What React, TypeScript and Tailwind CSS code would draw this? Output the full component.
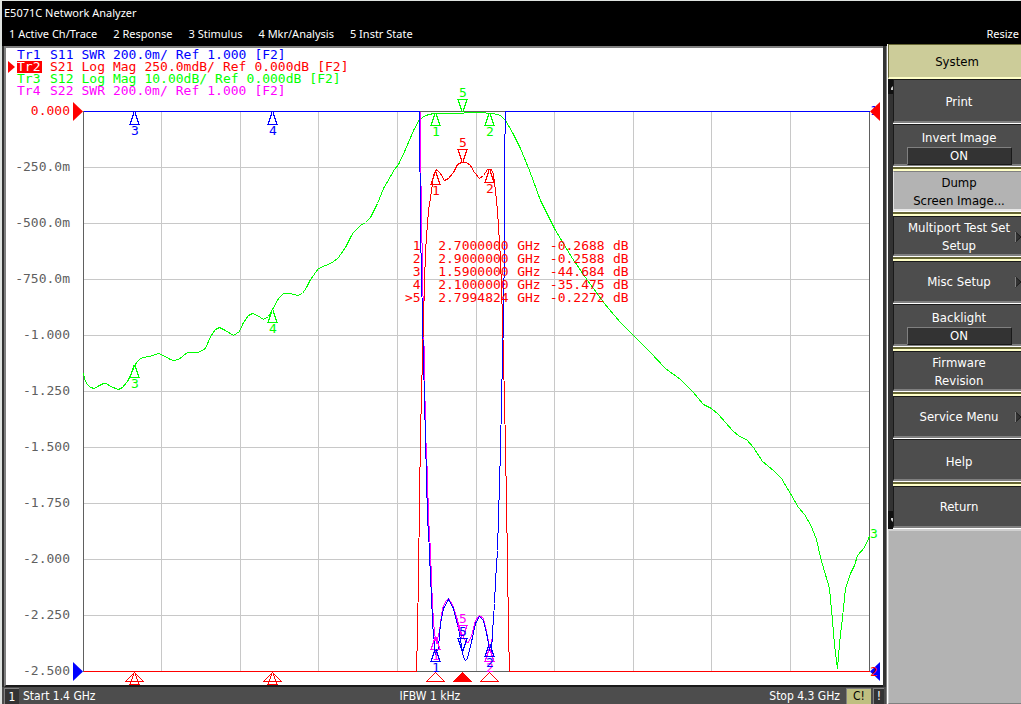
import React from 'react';
import { clsx } from 'clsx';

type Point = [number, number];

const BLUE = '#0000ff';
const RED = '#ff0000';
const GREEN = '#00ff00';
const MAGENTA = '#ff00ff';

const menus = ['1 Active Ch/Trace', '2 Response', '3 Stimulus', '4 Mkr/Analysis', '5 Instr State'];

const traces = [
  { id: 'Tr1', parts: ['S11', 'SWR', '200.0m/', 'Ref', '1.000', '[F2]'], color: 'text-[#0000ff]' },
  { id: 'Tr2', parts: ['S21', 'Log', 'Mag', '250.0mdB/', 'Ref', '0.000dB', '[F2]'], color: 'text-[#ff0000]', active: true },
  { id: 'Tr3', parts: ['S12', 'Log', 'Mag', '10.00dB/', 'Ref', '0.000dB', '[F2]'], color: 'text-[#00ff00]' },
  { id: 'Tr4', parts: ['S22', 'SWR', '200.0m/', 'Ref', '1.000', '[F2]'], color: 'text-[#ff00ff]' },
];

const readout = [
  ['1', '2.7000000', 'GHz', '-0.2688', 'dB'],
  ['2', '2.9000000', 'GHz', '-0.2588', 'dB'],
  ['3', '1.5900000', 'GHz', '-44.684', 'dB'],
  ['4', '2.1000000', 'GHz', '-35.475', 'dB'],
  ['>5', '2.7994824', 'GHz', '-0.2272', 'dB'],
];

const axisLabels = ['0.000', '-250.0m', '-500.0m', '-750.0m', '-1.000', '-1.250', '-1.500', '-1.750', '-2.000', '-2.250', '-2.500'];
const gridX = [161, 240, 318, 397, 476, 554, 633, 711, 790];

const s12: Point[] = [
  [83, 373], [84, 378], [86, 383], [90, 387], [94, 388], [99, 385], [103, 383], [106, 383], [110, 386], [118, 389],
  [122, 387], [127, 381], [131, 373], [134, 365], [137, 361], [140, 358], [143, 357], [149, 356], [158, 353], [163, 355],
  [170, 359], [173, 360], [178, 359], [187, 352], [198, 352], [205, 348], [210, 336], [215, 329], [219, 327], [225, 330],
  [233, 335], [239, 331], [243, 322], [248, 315], [252, 313], [257, 315], [263, 319], [268, 316], [272, 309], [278, 298],
  [283, 293], [290, 293], [297, 295], [302, 293], [306, 287], [310, 279], [318, 268], [325, 265], [332, 262], [338, 257],
  [345, 247], [350, 237], [353, 232], [360, 225], [365, 222], [370, 217], [377, 203], [383, 188], [394, 169], [398, 164],
  [405, 149], [413, 130], [419, 119], [425, 115], [433, 113], [450, 113], [477, 112], [493, 113], [500, 115], [505, 120],
  [512, 132], [520, 148], [529, 170], [540, 200], [555, 230], [563, 243], [572, 258], [587, 280], [604, 303], [608, 308],
  [620, 322], [633, 335], [650, 352], [665, 368], [680, 379], [692, 391], [703, 404], [711, 408], [718, 414], [732, 430],
  [739, 436], [746, 439], [753, 447], [762, 461], [773, 470], [781, 478], [790, 493], [798, 507], [804, 514], [810, 524],
  [816, 539], [820, 557], [829, 588], [832, 620], [834, 645], [837, 668], [839, 643], [842, 617], [845, 588], [850, 573],
  [854, 565], [857, 555], [864, 547], [869, 536],
];

const s21: Point[] = [
  [83, 671], [416, 671], [417, 632], [418, 574], [419, 503], [420, 433], [423, 318], [425, 250], [428, 210], [430, 197],
  [432, 183], [433, 175], [436, 169], [440, 173], [444, 180], [448, 178], [453, 172], [457, 164], [461, 162], [466, 162],
  [470, 165], [474, 172], [479, 178], [483, 175], [487, 169], [491, 169], [493, 174], [495, 190], [497, 210], [500, 258],
  [502, 318], [504, 400], [505, 447], [506, 503], [507, 560], [508, 630], [509, 671], [869, 671],
];

const s11: Point[] = [
  [83, 111], [419, 111], [420, 230], [422, 318], [424, 400], [426, 477], [427, 517], [429, 550], [430, 580], [431, 593],
  [432, 623], [435, 654], [438, 647], [440, 623], [443, 608], [448, 599], [453, 608], [458, 628], [461, 645], [463, 657],
  [465, 660], [467, 658], [472, 637], [475, 623], [479, 616], [483, 620], [487, 637], [489, 650], [491, 652], [492, 632],
  [494, 603], [495, 580], [497, 550], [498, 517], [499, 483], [500, 450], [501, 400], [503, 318], [504, 240], [504, 157],
  [505, 111], [869, 111],
];

const s22: Point[] = [
  [420, 111], [420, 157], [422, 270], [424, 370], [425, 430], [427, 477], [428, 517], [430, 550], [431, 580], [432, 605],
  [434, 633], [436, 643], [439, 630], [442, 608], [445, 601], [448, 598], [452, 604], [456, 616], [459, 628], [463, 637],
  [466, 642], [468, 642], [471, 635], [475, 620], [479, 615], [483, 618], [486, 631], [489, 646], [491, 645], [492, 632],
  [494, 603], [495, 580], [497, 550], [498, 517], [499, 483], [500, 450], [501, 400], [503, 318], [504, 240], [504, 157],
  [505, 111],
];

const line = (points: Point[]) => points.map(([x, y]) => `${x + 0.5},${y + 0.5}`).join(' ');

// Plot markers: x and y give the tip, the number sits at the flat end
const markers = [
  { n: 3, x: 134, y: 365, color: GREEN },
  { n: 4, x: 272, y: 310, color: GREEN },
  { n: 1, x: 435, y: 113, color: GREEN },
  { n: 2, x: 489, y: 113, color: GREEN },
  { n: 5, x: 462, y: 111, color: GREEN, down: true },
  { n: 1, x: 435, y: 172, color: RED },
  { n: 2, x: 489, y: 170, color: RED },
  { n: 5, x: 462, y: 161, color: RED, down: true },
  { n: 1, x: 435, y: 637, color: MAGENTA },
  { n: 2, x: 489, y: 649, color: MAGENTA },
  { n: 5, x: 462, y: 637, color: MAGENTA, down: true },
  { n: 3, x: 134, y: 112, color: BLUE },
  { n: 4, x: 272, y: 112, color: BLUE },
  { n: 1, x: 435, y: 649, color: BLUE },
  { n: 2, x: 489, y: 644, color: BLUE },
  { n: 5, x: 462, y: 650, color: BLUE, down: true },
];

const Marker = ({ n, x, y, color, down }: { n: number; x: number; y: number; color: string; down?: boolean }) => {
  const base = down ? y - 12 : y + 12;
  return (
    <g>
      <path
        d={`M${x} ${y}L${x - 4} ${base}H${x + 5}L${x + 1} ${y}`}
        transform="translate(0 .5)"
        fill="none"
        stroke={color}
        shapeRendering="crispEdges"
      />
      <text x={x + 1} y={down ? base - 2 : base + 11} fill={color} textAnchor="middle">
        {n}
      </text>
    </g>
  );
};

const Chart = () => (
  <svg
    viewBox="6 97 877 588"
    className="block h-auto w-full overflow-visible font-['DejaVu_Sans_Mono',monospace] text-[13px]"
    role="img"
    aria-label="S-parameter traces"
  >
    {/* Graticule */}
    <g shapeRendering="crispEdges" stroke="#c8c8c8">
      {gridX.map((x) => (
        <path key={x} d={`M${x + 0.5} 111V671`} />
      ))}
      {axisLabels.slice(1, -1).map((label, i) => (
        <path key={label} d={`M83 ${167.5 + i * 56}H869`} />
      ))}
      <path d="M83.5 111V671M869.5 111V671M83 111.5H870M83 671.5H870" stroke="#606060" />
    </g>

    {axisLabels.map((label, i) => (
      <text key={label} x={70} y={115 + i * 56} textAnchor="end" fill={i === 0 ? RED : '#606060'}>
        {label}
      </text>
    ))}

    {/* Traces */}
    <g fill="none" shapeRendering="crispEdges">
      <polyline points={line(s12)} stroke={GREEN} />
      <polyline points={line(s22)} stroke={MAGENTA} />
      <polyline points={line(s21)} stroke={RED} />
      <polyline points={line(s11)} stroke={BLUE} />
    </g>

    {markers.map((m, i) => (
      <Marker key={i} {...m} />
    ))}

    {/* Stimulus markers under the axis */}
    <g fill="none" stroke={RED} shapeRendering="crispEdges">
      {[134, 272].map((x) => (
        <path key={x} d={`M${x + 0.5} 672.5l-9 9h18zM${x} 673L${x - 4} 684.5H${x + 5}L${x + 1} 673`} />
      ))}
      {[435, 489].map((x) => (
        <path key={x} d={`M${x + 0.5} 672.5l-9 9h18z`} />
      ))}
      <path d="M462.5 672.5l-9 9h18z" fill={RED} />
    </g>

    {/* Reference level pointers */}
    <path d="M73 102L83 111.500L73 121z" fill={RED} />
    <path d="M73 662L83 671.500L73 681z" fill={BLUE} />
    <text x={870} y={115} fill={BLUE}>1</text>
    <path d="M880 102L870 111.500L880 121z" fill={RED} />
    <path d="M880 662L870 671.500L880 681z" fill={BLUE} />
    <text x={870} y={676} fill={RED}>2</text>
    <text x={870} y={538} fill={GREEN}>3</text>
  </svg>
);

const Readout = () => (
  <table className="absolute left-[45%] top-[24%] mt-px border-collapse font-['DejaVu_Sans_Mono',monospace] text-[13px] leading-[13px] text-[#ff0000]">
    <tbody>
      {readout.map(([n, freq, unit, value, db]) => (
        <tr key={n}>
          <td className="w-5 p-0 text-right">{n}</td>
          <td className="w-[88px] p-0 text-right">{freq}</td>
          <td className="w-8 p-0 text-right">{unit}</td>
          <td className="w-16 p-0 text-right">{value}</td>
          <td className="w-6 p-0 text-right">{db}</td>
        </tr>
      ))}
    </tbody>
  </table>
);

const softkeys = [
  { lines: ['Print'] },
  { lines: ['Invert Image'], value: 'ON', group: true },
  { lines: ['Dump', 'Screen Image...'], pressed: true, group: true },
  { lines: ['Multiport Test Set', 'Setup'], more: true, group: true },
  { lines: ['Misc Setup'], more: true },
  { lines: ['Backlight'], value: 'ON', group: true },
  { lines: ['Firmware', 'Revision'], group: true },
  { lines: ['Service Menu'], more: true },
  { lines: ['Help'], group: true },
  { lines: ['Return'] },
];

type Softkey = { lines: string[]; value?: string; pressed?: boolean; more?: boolean; group?: boolean };

const SoftkeyButton = ({ lines, value, pressed, more, group, afterGroup }: Softkey & { afterGroup: boolean }) => (
  <div
    className={clsx(
      'flex h-[45px] flex-col',
      afterGroup && 'border-t-2 border-[#ffffc8]',
    )}
  >
    <button
      className={clsx(
        'relative flex min-h-0 w-full flex-1 flex-col items-center justify-center border-b-2 border-l border-t pl-[3px] leading-[18px]',
        group && !afterGroup && 'pt-1',
        !!group === afterGroup && group && 'pt-[2px]',
        !group && !afterGroup && 'pt-[2px]',
        pressed
          ? 'border-b-[#e8e8e8] border-l-[#e0e0e0] border-t-[#808080] bg-[#b3b3b3] text-black'
          : 'border-b-[#808080] border-l-[#1a1a1a] border-t-[#1a1a1a] bg-[#4d4d4d] text-white',
      )}
    >
      {lines.map((text) => (
        <span key={text}>{text}</span>
      ))}
      {value && (
        <span className="h-[18px] w-[105px] border border-b-[#1a1a1a] border-l-[#808080] border-r-[#1a1a1a] border-t-[#808080] bg-[#333333] leading-4">
          {value}
        </span>
      )}
      {more && (
        <svg className="absolute right-0 top-[14px] h-3 w-[6px]" viewBox="0 0 6 12">
          <path d="M.5 1L6 6L.5 11z" fill="#333333" stroke="#1a1a1a" />
          <path d="M.5 1V11" stroke="#808080" />
        </svg>
      )}
    </button>
    <div className={clsx('shrink-0 border-t border-white bg-[#666633]', group ? 'h-[3px]' : 'h-px')} />
  </div>
);

const Sidebar = () => (
  <aside className="-mt-[2px] flex w-[134px] shrink-0 flex-col border-l border-white bg-[#333333] font-['DejaVu_Sans_Condensed','DejaVu_Sans',sans-serif] text-[13px] font-stretch-condensed">
    <h1 className="h-[35px] border-b-2 border-l border-t border-b-[#ffffc8] border-l-[#666633] border-t-[#666633] bg-[#cccc99] pl-1 pt-px text-center leading-8 text-black">
      System
    </h1>
    <div className="flex bg-[#333333]">
      <div className="flex w-[5px] shrink-0 flex-col justify-between">
        <svg className="h-[15px] w-[5px]" viewBox="0 0 5 15">
          <path d="M0 0H5V15H0z" fill="#111111" />
          <path d="M3 11V9L5 7V11z" fill="#cccccc" />
        </svg>
        <svg className="h-[18px] w-[5px]" viewBox="0 0 5 18">
          <path d="M0 0H5V18H0z" fill="#111111" />
          <path d="M3 7V9L5 11V7z" fill="#cccccc" />
        </svg>
      </div>
      <nav className="min-w-0 flex-1">
        {softkeys.map((key, i) => (
          <SoftkeyButton key={key.lines[0]} {...key} afterGroup={i > 0 && !!softkeys[i - 1].group} />
        ))}
      </nav>
    </div>
    <div className="flex-1 border-l border-t-2 border-b border-b-[#808080] border-l-[#d0d0d0] border-t-[#d0d0d0] bg-[#b3b3b3]" />
  </aside>
);

export default function App() {
  return (
    <div className="flex min-h-screen flex-col border-l-2 border-t border-[#dfe3e0] bg-[#dfe3e0] font-['Noto_Sans',sans-serif] text-[11px]">
      <header className="bg-black pb-[2px] text-white">
        <div className="h-[22px] pl-[2px] leading-6">E5071C Network Analyzer</div>
        <nav className="flex h-[21px] items-center justify-between pl-[7px] pr-[2px]">
          <div className="flex gap-4">
            {menus.map((name) => (
              <button key={name} className="whitespace-nowrap leading-5">{name}</button>
            ))}
          </div>
          <button className="leading-5">Resize</button>
        </nav>
      </header>

      <div className="flex flex-1">
        <main className="flex min-w-0 flex-1 flex-col border-r border-[#808080] bg-[#333333]">
          <section className="ml-[2px] mr-[3px] border-l-2 border-t-2 border-b-2 border-b-[#1a1a1a] border-l-[#808080] border-t-[#808080] bg-white">
            <div className="pt-px font-['DejaVu_Sans_Mono',monospace] text-[13px] leading-3">
              {traces.map(({ id, parts, color, active }) => (
                <div key={id} className={clsx('flex h-3 items-center', color)}>
                  <span className="flex w-[11px] shrink-0 pl-[2px]">
                    {active && (
                      <svg className="h-3 w-[7px]" viewBox="0 0 7 12">
                        <path d="M0 0L7 6L0 12z" fill="currentColor" />
                      </svg>
                    )}
                  </span>
                  <div className="flex gap-2">
                    <span className={clsx('w-[25px]', active && 'bg-[#ff0000] text-white')}>{id}</span>
                    {parts.map((part) => (
                      <span key={part}>{part}</span>
                    ))}
                  </div>
                </div>
              ))}
            </div>
            <div className="relative">
              <Chart />
              <Readout />
            </div>
          </section>

          <footer className="flex h-[17px] items-center bg-[#4d4d4d] pl-[2px] pr-[2px] font-['DejaVu_Sans_Condensed','DejaVu_Sans',sans-serif] text-[12px] text-white font-stretch-condensed">
            <div className="flex flex-14 items-center gap-1">
              <span className="h-4 w-[15px] border-l border-t border-[#808080] bg-[#333333] text-center leading-4">1</span>
              <span>Start 1.4 GHz</span>
            </div>
            <span>IFBW 1 kHz</span>
            <div className="flex flex-15 items-center justify-end gap-[2px]">
              <span className="pr-1">Stop 4.3 GHz</span>
              <span className="h-4 w-[25px] border-l border-t border-[#808080] bg-[#bfbf80] text-center leading-[15px] text-black">C!</span>
              <span className="h-4 w-[11px] border-l border-t border-[#808080] bg-[#333333] text-center leading-[15px]">!</span>
            </div>
          </footer>
        </main>
        <Sidebar />
      </div>
    </div>
  );
}
